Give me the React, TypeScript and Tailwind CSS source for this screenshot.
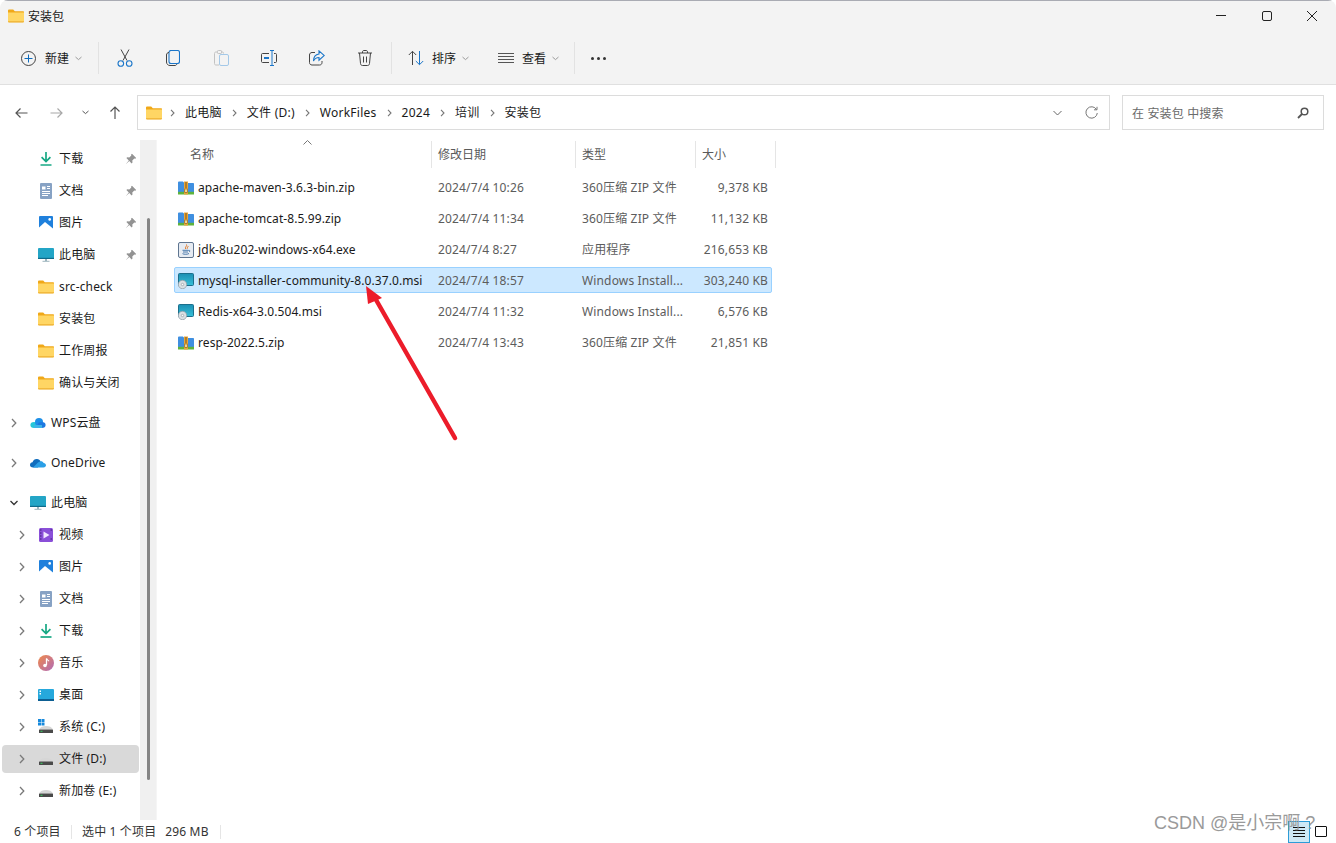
import type { ReactNode } from "react";

const FONT = `"Noto Sans", "Noto Sans CJK SC", sans-serif`;

function Folder({ size = 16 }: { size?: number }) {
  return (
    <svg width={size} height={size} viewBox="0 0 16 16" className="shrink-0">
      <path d="M0 2.500C0 2 .4 1.600 1 1.600h4.200l1.600 1.600H15c.6 0 1 .4 1 1v2H0z" fill="#f0a818" />
      <path d="M0 4.600h16v8.700c0 .6-.4 1-1 1H1c-.6 0-1-.4-1-1z" fill="#ffd664" />
      <path d="M0 13.200h16v.3c0 .5-.4.9-1 .9H1c-.6 0-1-.4-1-.9z" fill="#eeb030" />
    </svg>
  );
}

function Chev({ open = false, className = "" }: { open?: boolean; className?: string }) {
  return (
    <svg width="8" height="10" viewBox="0 0 8 10" className={className}>
      {open ? (
        <path d="M.5 3l3.500 3.500L7.500 3" fill="none" stroke="#333" strokeWidth="1.300" />
      ) : (
        <path d="M2 1l3.800 4L2 9" fill="none" stroke="#7a7a7a" strokeWidth="1.300" />
      )}
    </svg>
  );
}

function SmallDown() {
  return (
    <svg width="7" height="5" viewBox="0 0 7 5" className="shrink-0">
      <path d="M.5 1l3 2.600L6.500 1" fill="none" stroke="#9a9a9a" strokeWidth="1" />
    </svg>
  );
}

function Sep() {
  return <div className="h-[32px] w-px shrink-0 bg-[#e2e2e2]" />;
}

function ToolBtn({ children }: { children: ReactNode }) {
  return <div className="flex h-[48px] w-[48px] shrink-0 items-center justify-center">{children}</div>;
}

function Download() {
  return (
    <svg width="16" height="16" viewBox="0 0 16 16">
      <path d="M8 1v9M3.600 6.200L8 10.600l4.400-4.400" fill="none" stroke="#17a884" strokeWidth="1.700" />
      <path d="M2.500 14h11" stroke="#17a884" strokeWidth="1.700" />
    </svg>
  );
}

function Docs() {
  return (
    <svg width="16" height="16" viewBox="0 0 16 16">
      <rect x="2" y="0" width="12" height="16" rx="1" fill="#87a2c4" />
      <path d="M4 3.500h3.500v3H4z" fill="#fff" />
      <path d="M9 3.500h3M9 5.500h3M4 8.500h8M4 10.500h8M4 12.500h6" stroke="#fff" strokeWidth="1" />
    </svg>
  );
}

function Pictures() {
  return (
    <svg width="16" height="16" viewBox="0 0 16 16">
      <rect x="1" y="1" width="14" height="14" rx="1" fill="#1f80dc" />
      <path d="M1 15v-2.500L7 7l8 6.500V15z" fill="#fff" />
      <circle cx="11.700" cy="4.400" r="1.300" fill="#fff" />
    </svg>
  );
}

function Pc() {
  return (
    <svg width="16" height="16" viewBox="0 0 16 16">
      <rect x="0" y="1" width="16" height="11" rx="1" fill="#23a5c6" />
      <rect x="0" y="10.800" width="16" height="1.200" fill="#0f6b8a" />
      <path d="M7 12h2v2H7z" fill="#9db4bd" />
      <path d="M4.500 14.300h7" stroke="#9db4bd" strokeWidth="1" />
    </svg>
  );
}

function WpsCloud() {
  return (
    <svg width="16" height="16" viewBox="0 0 16 16">
      <ellipse cx="4" cy="10" rx="3.600" ry="3" fill="#25c7d9" />
      <circle cx="9" cy="7" r="4" fill="#1d8fe8" />
      <ellipse cx="11.600" cy="10" rx="4" ry="3" fill="#1d78e0" />
      <rect x="4" y="10" width="8" height="3" fill="#3db4e8" />
    </svg>
  );
}

function OneDrive() {
  return (
    <svg width="16" height="16" viewBox="0 0 16 16">
      <path d="M3 12.500C1 12.500 0 11.300 0 10c0-1.500 1-2.500 2.500-2.700C3.200 5 5 3.800 7 4c1.700.1 3 1.100 3.600 2.500L8 12.500z" fill="#0f6cbd" />
      <path d="M3 12.500h10.500c1.500 0 2.500-1 2.500-2.200 0-1.300-1-2.300-2.400-2.300C13 6.500 11.500 6 10.500 6.300 8 7 7 8.500 6 9.500z" fill="#2b9fe6" />
    </svg>
  );
}

function Video() {
  return (
    <svg width="16" height="16" viewBox="0 0 16 16">
      <rect x="1" y="1" width="14" height="14" rx="1.500" fill="#8a4fd8" />
      <path d="M5.500 4.500v7l6-3.500z" fill="#f1e6ff" />
      <path d="M2.200 3h1.200M2.200 6h1.200M2.200 9h1.200M2.200 12h1.200M12.600 3h1.200M12.600 12h1.200" stroke="#2d1560" strokeWidth="1.200" />
    </svg>
  );
}

function Music() {
  return (
    <svg width="16" height="16" viewBox="0 0 16 16">
      <defs>
        <linearGradient id="musicBg" x1="0" y1="0" x2="1" y2="1">
          <stop offset="0" stopColor="#f08a4a" />
          <stop offset="1" stopColor="#b06ab8" />
        </linearGradient>
      </defs>
      <circle cx="8" cy="8" r="8" fill="url(#musicBg)" />
      <path d="M8.500 3.500v6.500" stroke="#fff" strokeWidth="1.300" />
      <path d="M8.500 3.500c.4 1.500 2 1.600 2.500 2.800" fill="none" stroke="#fff" strokeWidth="1.100" />
      <circle cx="7" cy="10.500" r="1.800" fill="#fff" />
    </svg>
  );
}

function Desktop() {
  return (
    <svg width="16" height="16" viewBox="0 0 16 16">
      <rect x="0" y="2" width="16" height="12" rx="1" fill="#26a8dc" />
      <rect x="0" y="12" width="16" height="2" fill="#0d5f92" />
      <path d="M1.500 3.500h1.500v1.500H1.500zM1.500 6h1.500v1.500H1.500z" fill="#fff" />
    </svg>
  );
}

function Drive({ win = false }: { win?: boolean }) {
  return (
    <svg width="16" height="16" viewBox="0 0 16 16">
      {win && <path d="M0 0h3v3H0zM3.500 0h3v3h-3zM0 3.500h3v3H0zM3.500 3.500h3v3h-3z" fill="#1689dc" />}
      <path d="M1 10.500C2 8 5 7 8 7s6 1 7 3.500z" fill="#d6d6d6" />
      <rect x="1" y="10.500" width="14" height="3.500" rx=".6" fill="#4a4a4a" />
      <rect x="2.500" y="11.800" width="2" height="1" fill="#38d060" />
    </svg>
  );
}

function Pin() {
  return (
    <svg width="12" height="12" viewBox="0 0 12 12" className="shrink-0">
      <path d="M7 .8l4.200 4.200-1 .7-.9-.2-2 2 .2 2-.9.9-2.300-2.400L1 11l-.1-.1 2.900-3.400L1.400 5.100l.9-.9 2 .2 2-2-.2-.9z" fill="#939393" />
    </svg>
  );
}

function ZipIcon() {
  return (
    <svg width="16" height="16" viewBox="0 0 16 16" className="shrink-0">
      <path d="M0 2.500c0-.5.400-.9.900-.9h4l1.500 1.500H15c.6 0 1 .4 1 1v8.400H0z" fill="#3f8fe0" />
      <rect x="0" y="11.800" width="16" height="2.700" fill="#5eb33c" />
      <rect x="6" y="1.500" width="4" height="13" fill="#e9a63a" />
      <path d="M7 3h2M7 5h2M7 7h2" stroke="#7a5416" strokeWidth="1" />
      <rect x="6.800" y="9" width="2.400" height="3.400" fill="#fbe3a0" stroke="#7a5416" strokeWidth=".6" />
    </svg>
  );
}

function MsiIcon() {
  return (
    <svg width="16" height="16" viewBox="0 0 16 16" className="shrink-0">
      <defs>
        <linearGradient id="msiBg" x1="0" y1="0" x2="0" y2="1">
          <stop offset="0" stopColor="#1b8fb3" />
          <stop offset="1" stopColor="#38c0d8" />
        </linearGradient>
      </defs>
      <rect x="0.500" y="0.500" width="15" height="12" rx="1" fill="url(#msiBg)" stroke="#1b6f8c" />
      <circle cx="4.500" cy="11.500" r="4.200" fill="#d9dfe3" stroke="#8d9aa3" strokeWidth=".7" />
      <circle cx="4.500" cy="11.500" r="1.200" fill="#fff" stroke="#7f8b93" strokeWidth=".6" />
    </svg>
  );
}

function JdkIcon() {
  return (
    <svg width="16" height="16" viewBox="0 0 16 16" className="shrink-0">
      <rect x="0.500" y="0.500" width="15" height="15" rx="1.500" fill="#e6ebf2" stroke="#5f7590" />
      <path d="M8.500 2.500c1 1.500-2 2.500-.8 4.500M10 4c.5 1-1.300 1.500-.7 2.700" fill="none" stroke="#e2751e" strokeWidth="1" />
      <path d="M4.500 8.300h6M5 10h5M4.500 11.700c1.500.8 5 .8 6.500-.2M10.500 8.500c1.500-.5 2 .8.500 1.300" fill="none" stroke="#3a6ea5" strokeWidth=".9" />
    </svg>
  );
}

type NavItem = {
  label: string;
  icon: ReactNode;
  level: 1 | 2;
  pin?: boolean;
  chevron?: "closed" | "open";
  selected?: boolean;
  spaced?: boolean;
};

const NAV: NavItem[] = [
  { label: "下载", icon: <Download />, level: 2, pin: true },
  { label: "文档", icon: <Docs />, level: 2, pin: true },
  { label: "图片", icon: <Pictures />, level: 2, pin: true },
  { label: "此电脑", icon: <Pc />, level: 2, pin: true },
  { label: "src-check", icon: <Folder />, level: 2 },
  { label: "安装包", icon: <Folder />, level: 2 },
  { label: "工作周报", icon: <Folder />, level: 2 },
  { label: "确认与关闭", icon: <Folder />, level: 2 },
  { label: "WPS云盘", icon: <WpsCloud />, level: 1, chevron: "closed", spaced: true },
  { label: "OneDrive", icon: <OneDrive />, level: 1, chevron: "closed", spaced: true },
  { label: "此电脑", icon: <Pc />, level: 1, chevron: "open", spaced: true },
  { label: "视频", icon: <Video />, level: 2, chevron: "closed" },
  { label: "图片", icon: <Pictures />, level: 2, chevron: "closed" },
  { label: "文档", icon: <Docs />, level: 2, chevron: "closed" },
  { label: "下载", icon: <Download />, level: 2, chevron: "closed" },
  { label: "音乐", icon: <Music />, level: 2, chevron: "closed" },
  { label: "桌面", icon: <Desktop />, level: 2, chevron: "closed" },
  { label: "系统 (C:)", icon: <Drive win />, level: 2, chevron: "closed" },
  { label: "文件 (D:)", icon: <Drive />, level: 2, chevron: "closed", selected: true },
  { label: "新加卷 (E:)", icon: <Drive />, level: 2, chevron: "closed" },
];

const FILES = [
  { name: "apache-maven-3.6.3-bin.zip", date: "2024/7/4 10:26", type: "360压缩 ZIP 文件", size: "9,378 KB", icon: <ZipIcon /> },
  { name: "apache-tomcat-8.5.99.zip", date: "2024/7/4 11:34", type: "360压缩 ZIP 文件", size: "11,132 KB", icon: <ZipIcon /> },
  { name: "jdk-8u202-windows-x64.exe", date: "2024/7/4 8:27", type: "应用程序", size: "216,653 KB", icon: <JdkIcon /> },
  { name: "mysql-installer-community-8.0.37.0.msi", date: "2024/7/4 18:57", type: "Windows Install...", size: "303,240 KB", icon: <MsiIcon />, selected: true },
  { name: "Redis-x64-3.0.504.msi", date: "2024/7/4 11:32", type: "Windows Install...", size: "6,576 KB", icon: <MsiIcon /> },
  { name: "resp-2022.5.zip", date: "2024/7/4 13:43", type: "360压缩 ZIP 文件", size: "21,851 KB", icon: <ZipIcon /> },
];

const CRUMBS = ["此电脑", "文件 (D:)", "WorkFiles", "2024", "培训", "安装包"];

function NavRow({ item }: { item: NavItem }) {
  return (
    <div
      className={`ml-[2px] flex h-7 w-[137px] shrink-0 items-center rounded ${item.selected ? "bg-[#d9d9d9]" : ""} ${item.spaced ? "mt-2" : ""}`}
    >
      <div className={`flex shrink-0 justify-end pr-[12px] ${item.level === 1 ? "w-[28px]" : "w-[36px]"}`}>
        {item.chevron && <Chev open={item.chevron === "open"} />}
      </div>
      <div className="w-[21px] shrink-0">{item.icon}</div>
      <span className="flex-1 whitespace-nowrap leading-[16px] tracking-[0.15px] text-[#1a1a1a]">{item.label}</span>
      {item.pin && (
        <div className="pr-[2px]">
          <Pin />
        </div>
      )}
    </div>
  );
}

export default function App() {
  return (
    <div
      className="relative flex h-[843px] w-[1336px] flex-col overflow-hidden rounded-t-lg rounded-bl-lg bg-white text-[12px] leading-[16px]"
      style={{ fontFamily: FONT }}
    >
      {/* Title bar */}
      <div className="flex h-[34px] shrink-0 items-center border-t border-[#a9abb3] bg-[#f3f3f3] pb-[4px] pl-[8px]">
        <Folder />
        <span className="ml-[4px] pt-[2px] text-[#1a1a1a]">安装包</span>
        <div className="ml-auto flex items-center">
          <div className="flex w-[46px] justify-center">
            <div className="h-px w-[10px] bg-[#222]" />
          </div>
          <div className="flex w-[46px] justify-center">
            <div className="h-[10px] w-[10px] rounded-[2px] border border-[#222]" />
          </div>
          <div className="flex w-[46px] justify-center pr-[2px]">
            <svg width="10" height="10" viewBox="0 0 10 10">
              <path d="M0 0l10 10M10 0L0 10" stroke="#222" strokeWidth="1" />
            </svg>
          </div>
        </div>
      </div>

      {/* Toolbar */}
      <div className="flex h-[51px] shrink-0 items-center border-b border-[#e0e0e0] bg-[#f3f3f3] pb-[2px] pl-[21px]">
        <svg width="15" height="15" viewBox="0 0 15 15" className="shrink-0">
          <circle cx="7.500" cy="7.500" r="7" fill="none" stroke="#444" strokeWidth="1" />
          <path d="M7.500 3.500v8M3.500 7.500h8" stroke="#0f6cbd" strokeWidth="1" />
        </svg>
        <span className="ml-[9px] pt-[2px] text-[#1a1a1a]">新建</span>
        <div className="ml-[6px] mr-[16px]">
          <SmallDown />
        </div>
        <Sep />
        <div className="ml-[2px] flex items-center">
          <ToolBtn>
            <svg width="16" height="18" viewBox="0 0 16 18">
              <path d="M4 .5l6 11M12 .5l-6 11" stroke="#444" strokeWidth="1" fill="none" />
              <circle cx="3.800" cy="14.500" r="2.800" fill="none" stroke="#1b76c9" strokeWidth="1.100" />
              <circle cx="12.200" cy="14.500" r="2.800" fill="none" stroke="#1b76c9" strokeWidth="1.100" />
            </svg>
          </ToolBtn>
          <ToolBtn>
            <svg width="14" height="16" viewBox="0 0 14 16">
              <rect x="3" y=".5" width="10.500" height="13" rx="2" fill="none" stroke="#1b76c9" strokeWidth="1.100" />
              <path d="M3 2.500C1.500 2.500 .5 3.500.5 5v7c0 2 1.500 3.500 3.500 3.500h5c1 0 1.600-.6 1.800-1.500" fill="none" stroke="#444" strokeWidth="1" />
            </svg>
          </ToolBtn>
          <ToolBtn>
            <svg width="15" height="16" viewBox="0 0 15 16">
              <rect x="5.500" y="4.500" width="9" height="11" rx="1.500" fill="none" stroke="#a3c8e8" strokeWidth="1" />
              <path d="M3.500 2H2C1 2 .5 2.500.5 3.500v10c0 1 .5 1.500 1.500 1.500h3M9.500 3.500V3c0-.5-.5-1-1-1H7" fill="none" stroke="#c2c2c2" strokeWidth="1" />
              <rect x="3.500" y=".5" width="4" height="3" rx=".8" fill="none" stroke="#c2c2c2" strokeWidth="1" />
            </svg>
          </ToolBtn>
          <ToolBtn>
            <svg width="16" height="16" viewBox="0 0 16 16">
              <path d="M8 3.500H1.500c-.6 0-1 .4-1 1v7c0 .6.400 1 1 1H8M13 3.500h1.500c.6 0 1 .4 1 1v7c0 .6-.4 1-1 1H13" fill="none" stroke="#444" strokeWidth="1" />
              <path d="M9 .5h4M9 15.500h4M11 .5v15" stroke="#1b76c9" strokeWidth="1" fill="none" />
              <rect x="3" y="7" width="5" height="2" fill="#1b76c9" />
            </svg>
          </ToolBtn>
          <ToolBtn>
            <svg width="16" height="16" viewBox="0 0 16 16">
              <path d="M6 2.500H3C1.500 2.500.5 3.500.5 5v7.500C.5 14 1.500 15 3 15h7.500c1.500 0 2.500-1 2.500-2.500V11" fill="none" stroke="#444" strokeWidth="1" />
              <path d="M10 .8l5.300 4.700-5.300 4.700V7.500C7.500 7.500 5.500 8.800 4.500 11c0-3.500 2-6.500 5.500-7z" fill="none" stroke="#1b76c9" strokeWidth="1.100" />
            </svg>
          </ToolBtn>
          <ToolBtn>
            <svg width="14" height="16" viewBox="0 0 14 16">
              <path d="M0 3h14M4.500 3V2c0-1 .5-1.500 1.500-1.500h2c1 0 1.500.5 1.500 1.500v1M1.500 3l1 10.500c.1 1.200.8 2 2 2h5c1.200 0 1.900-.8 2-2l1-10.500M5.500 6.500v6M8.500 6.500v6" fill="none" stroke="#444" strokeWidth="1" />
            </svg>
          </ToolBtn>
        </div>
        <div className="ml-[2px]">
          <Sep />
        </div>
        <svg width="16" height="16" viewBox="0 0 16 16" className="ml-[16px] shrink-0">
          <path d="M4.500 15V1.500M.8 5l3.700-3.700L8.200 5" fill="none" stroke="#444" strokeWidth="1" />
          <path d="M11.500 1v13.500M7.800 11l3.700 3.700 3.700-3.700" fill="none" stroke="#1b76c9" strokeWidth="1" />
        </svg>
        <span className="ml-[8px] pt-[2px] text-[#1a1a1a]">排序</span>
        <div className="ml-[6px]">
          <SmallDown />
        </div>
        <svg width="16" height="11" viewBox="0 0 16 11" className="ml-[29px] shrink-0">
          <path d="M0 .5h16M0 3.500h16M0 6.500h16M0 9.500h16" stroke="#555" strokeWidth="1" />
        </svg>
        <span className="ml-[8px] pt-[2px] text-[#1a1a1a]">查看</span>
        <div className="ml-[6px] mr-[15px]">
          <SmallDown />
        </div>
        <Sep />
        <div className="ml-[16px] flex gap-[3px]">
          <div className="h-[3px] w-[3px] rounded-full bg-[#333]" />
          <div className="h-[3px] w-[3px] rounded-full bg-[#333]" />
          <div className="h-[3px] w-[3px] rounded-full bg-[#333]" />
        </div>
      </div>

      {/* Address row */}
      <div className="flex h-[55px] shrink-0 items-start pl-[15px] pr-[12px] pt-[10px]">
        <div className="flex h-[35px] w-[122px] shrink-0 items-center">
          <svg width="13" height="12" viewBox="0 0 13 12">
            <path d="M12.500 6H1M5.500 1.500L1 6l4.500 4.500" fill="none" stroke="#555" strokeWidth="1.200" />
          </svg>
          <svg width="13" height="12" viewBox="0 0 13 12" className="ml-[22px]">
            <path d="M.5 6H12M7.500 1.500L12 6l-4.500 4.500" fill="none" stroke="#a8a8a8" strokeWidth="1.200" />
          </svg>
          <svg width="7" height="5" viewBox="0 0 7 5" className="ml-[19px]">
            <path d="M.5 1l3 2.600L6.500 1" fill="none" stroke="#555" strokeWidth="1" />
          </svg>
          <svg width="12" height="13" viewBox="0 0 12 13" className="ml-[20px]">
            <path d="M6 13V1M1.500 5.500L6 1l4.500 4.500" fill="none" stroke="#555" strokeWidth="1.200" />
          </svg>
        </div>
        <div className="flex h-[35px] w-[973px] shrink-0 items-center border border-[#dcdcdc] pl-[8px] pr-[11px]">
          <div className="mr-[-2px]">
            <Folder />
          </div>
          {CRUMBS.map((c) => (
            <div key={c} className="flex items-center">
              <svg width="5" height="8" viewBox="0 0 5 8" className="mx-[10px]">
                <path d="M1 .8L4 4 1 7.200" fill="none" stroke="#777" strokeWidth="1.100" />
              </svg>
              <span className="tracking-[0.25px] text-[#1a1a1a]">{c}</span>
            </div>
          ))}
          <svg width="9" height="6" viewBox="0 0 9 6" className="ml-auto -translate-x-[2px]">
            <path d="M.5 1l4 4 4-4" fill="none" stroke="#666" strokeWidth="1" />
          </svg>
          <svg width="13" height="13" viewBox="0 0 13 13" className="ml-[21px]">
            <path d="M11.500 3.500A5.700 5.700 0 1 0 12.300 7M12 .8v3h-3" fill="none" stroke="#777" strokeWidth="1" />
          </svg>
        </div>
        <div className="ml-[12px] flex h-[35px] w-[202px] shrink-0 items-center border border-[#dcdcdc] pl-[9px] pr-[14px] text-[#6a6a6a]">
          <span className="pt-[2px] tracking-[0.15px]">在 安装包 中搜索</span>
          <svg width="12" height="12" viewBox="0 0 12 12" className="ml-auto">
            <circle cx="7.500" cy="4.500" r="3.300" fill="none" stroke="#555" strokeWidth="1.500" />
            <path d="M5 7L1 11" stroke="#555" strokeWidth="1.800" />
          </svg>
        </div>
      </div>

      {/* Body */}
      <div className="flex min-h-0 flex-1">
        <div className="flex w-[140px] shrink-0 flex-col gap-1 pt-[5px]">
          {NAV.map((item, i) => (
            <NavRow key={i} item={item} />
          ))}
        </div>
        <div className="flex w-[16px] shrink-0 flex-col bg-[#f0f0f0] pl-[7px] pt-[78px]">
          <div className="h-[562px] w-[2.500px] rounded-full bg-[#858585]" />
        </div>
        <div className="min-w-0 flex-1 border-l border-[#f5f5f5] pl-[17px]">
          <div className="relative flex h-[28px] items-center pt-[1px] text-[#5a5a5a]">
            <div className="absolute left-[129px] top-[0px]">
              <svg width="9" height="5" viewBox="0 0 9 5">
                <path d="M.5 4.500l4-4 4 4" fill="none" stroke="#777" strokeWidth="1" />
              </svg>
            </div>
            <div className="flex h-[27px] w-[258px] shrink-0 items-center border-r border-[#e5e5e5] pl-[16px]">名称</div>
            <div className="flex h-[27px] w-[144px] shrink-0 items-center border-r border-[#e5e5e5] pl-[6px]">修改日期</div>
            <div className="flex h-[27px] w-[120px] shrink-0 items-center border-r border-[#e5e5e5] pl-[6px]">类型</div>
            <div className="flex h-[27px] w-[80px] shrink-0 items-center border-r border-[#e5e5e5] pl-[6px]">大小</div>
          </div>
          <div className="mt-[6px] flex flex-col gap-[5px]">
            {FILES.map((f) => (
              <div
                key={f.name}
                className={`flex h-[26px] w-[598px] items-center rounded-[2px] border pt-[2px] tracking-[0.15px] ${f.selected ? "border-[#99d1ff] bg-[#cce8ff]" : "border-transparent"}`}
              >
                <div className="w-[19px] shrink-0 pl-[3px]">{f.icon}</div>
                <span className="ml-[4px] w-[240px] shrink-0 whitespace-nowrap tracking-[0.08px] text-[#1a1a1a]">{f.name}</span>
                <span className="w-[144px] shrink-0 text-[#5c5c5c]">{f.date}</span>
                <span className="w-[110px] shrink-0 whitespace-nowrap text-[#5c5c5c]">{f.type}</span>
                <span className="w-[76px] shrink-0 whitespace-nowrap text-right text-[#5c5c5c]">{f.size}</span>
              </div>
            ))}
          </div>
        </div>
      </div>

      {/* Status bar */}
      <div className="flex h-[23px] shrink-0 items-center pl-[14px] tracking-[0.15px] text-[#333]">
        <span className="w-[57px]">6 个项目</span>
        <div className="h-[14px] w-px bg-[#e5e5e5]" />
        <span className="ml-[10px]">选中 1 个项目</span>
        <span className="ml-[9px]">296 MB</span>
        <div className="ml-[11px] h-[14px] w-px bg-[#e5e5e5]" />
        <div className="ml-auto flex items-center pr-[9px]">
          <div className="flex h-[22px] w-[22px] items-center justify-center border border-[#2d9cd8] bg-[#cde8f5]">
            <svg width="12" height="10" viewBox="0 0 12 10">
              <path d="M0 .5h12M0 3.500h12M0 6.500h12M0 9.500h12" stroke="#111" strokeWidth="1" />
            </svg>
          </div>
          <div className="ml-[5px] h-[11px] w-[12px] rounded-[1px] border border-[#111]" />
        </div>
      </div>

      {/* Annotation and watermark over the window */}
      <svg width="1336" height="843" viewBox="0 0 1336 843" className="pointer-events-none absolute left-0 top-0">
        <path d="M455 438L375 298" stroke="#ec1c2a" strokeWidth="4.500" strokeLinecap="round" />
        <path d="M366 286L382 298L368 304z" fill="#ec1c2a" />
      </svg>
      <div
        className="pointer-events-none absolute left-[1154px] top-[811px] whitespace-nowrap text-[18px] leading-[24px] text-[#9a9a9a]"
        style={{ fontFamily: `"Liberation Sans", "Noto Sans CJK SC", sans-serif` }}
      >
        CSDN @是小宗啊 ?
      </div>
    </div>
  );
}
